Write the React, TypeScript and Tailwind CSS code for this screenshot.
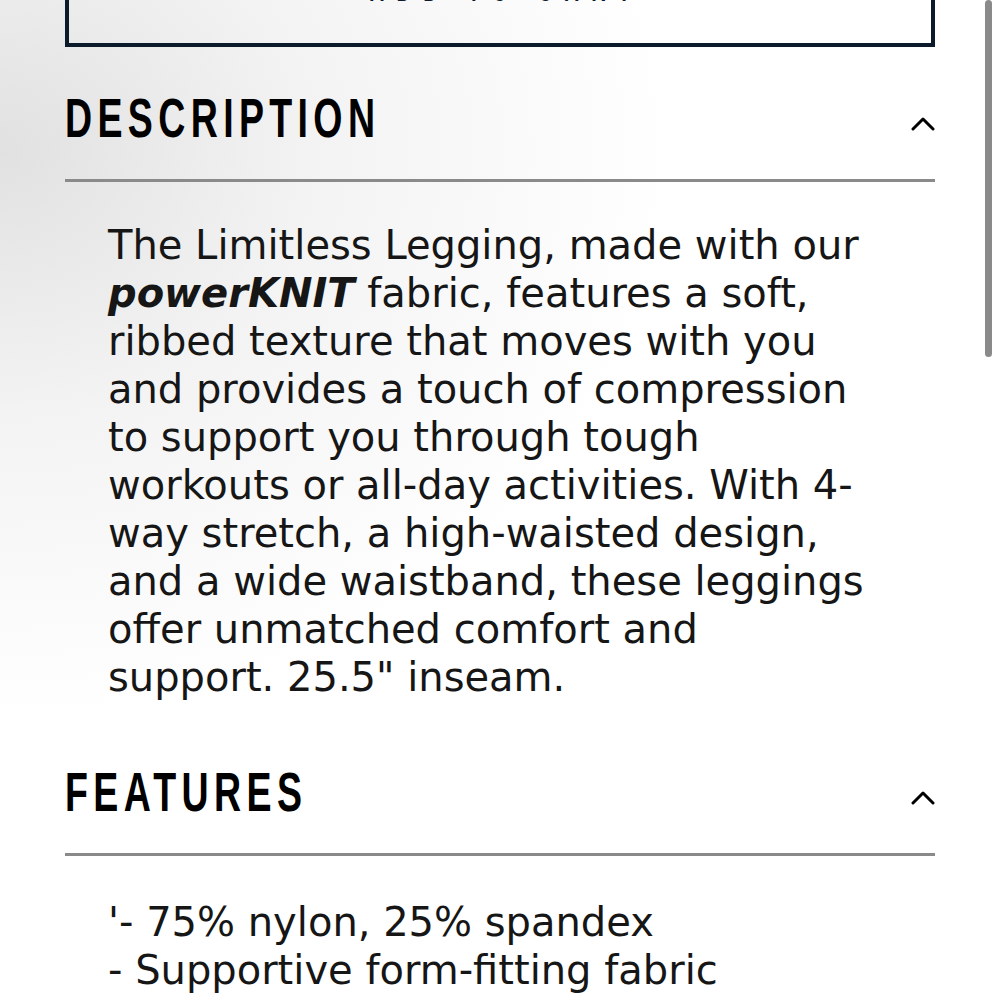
import React from "react";

const descriptionLines: React.ReactNode[] = [
  "The Limitless Legging, made with our",
  <>
    <span className="font-bold italic">powerKNIT</span> fabric, features a soft,
  </>,
  "ribbed texture that moves with you",
  "and provides a touch of compression",
  "to support you through tough",
  "workouts or all-day activities. With 4-",
  "way stretch, a high-waisted design,",
  "and a wide waistband, these leggings",
  "offer unmatched comfort and",
  'support. 25.5" inseam.',
];

const featureLines = ["'- 75% nylon, 25% spandex", "- Supportive form-fitting fabric"];

function ChevronUp() {
  return (
    <svg width="24" height="15" viewBox="0 0 24 15" fill="none" className="mt-[11px] shrink-0">
      <polyline
        points="2,13 12,3 22,13"
        stroke="#000"
        strokeWidth="3"
        strokeLinecap="round"
        strokeLinejoin="round"
      />
    </svg>
  );
}

function SectionHeader({ title }: { title: string }) {
  return (
    <div className="flex h-[135px] items-center justify-between border-b-[3px] border-[#8a8a8a] pt-[10px]">
      <h2 className="inline-block origin-left scale-x-[0.67] font-['Liberation_Sans',Arial,sans-serif] text-[56px] font-bold leading-none tracking-[8px] whitespace-nowrap text-black">
        {title}
      </h2>
      <ChevronUp />
    </div>
  );
}

function TextBlock({ lines, className }: { lines: React.ReactNode[]; className?: string }) {
  return (
    <p
      className={`pl-[43px] font-['DejaVu_Sans','Liberation_Sans',sans-serif] text-[40px] leading-[48px] whitespace-nowrap text-[#161616] ${className ?? ""}`}
    >
      {lines.map((line, i) => (
        <React.Fragment key={i}>
          {line}
          {i < lines.length - 1 && <br />}
        </React.Fragment>
      ))}
    </p>
  );
}

export default function App() {
  return (
    <div className="relative h-[1000px] w-full overflow-hidden bg-[radial-gradient(ellipse_at_0%_15%,#e1e1e1_0%,#f3f3f3_22%,#ffffff_48%)]">
      <div className="px-[65px]">
        <button className="-mt-[53px] flex h-[100px] w-full items-center justify-center border-4 border-[#0c1b2c] pb-[14px] font-['Liberation_Sans',Arial,sans-serif] text-[32px] font-bold text-[#0c1b2c]">
          <span className="inline-block scale-x-[0.62] pl-[20px] tracking-[20px] whitespace-nowrap">
            ADD TO CART
          </span>
        </button>

        <SectionHeader title="DESCRIPTION" />
        <TextBlock lines={descriptionLines} className="pb-[20px] pt-[39px]" />

        <SectionHeader title="FEATURES" />
        <TextBlock lines={featureLines} className="pt-[42px]" />
      </div>

      {/* scrollbar */}
      <div className="absolute right-[8px] top-0 h-[357px] w-[7px] rounded-full bg-[#8a8a8a]" />
    </div>
  );
}
